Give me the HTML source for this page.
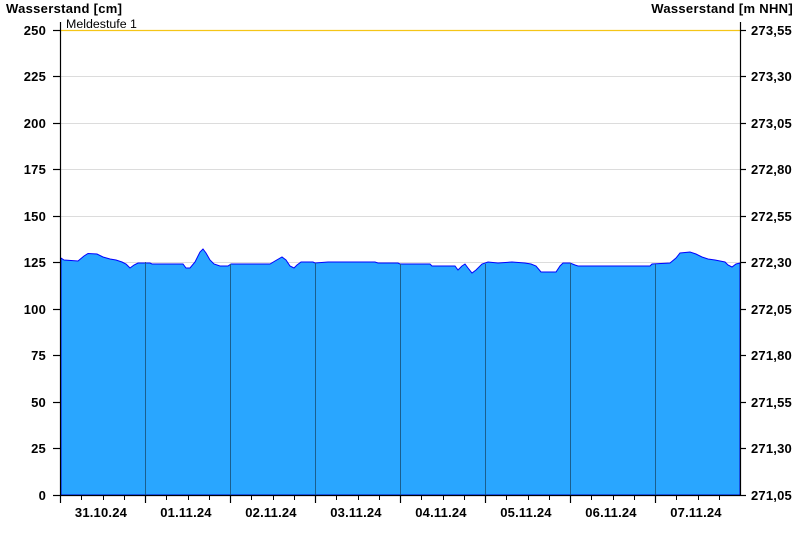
<!DOCTYPE html>
<html><head><style>body{margin:0;background:#fff}svg{display:block}text{font-family:"Liberation Sans",Arial,sans-serif}</style></head><body>
<svg width="800" height="550" viewBox="0 0 800 550">
<g stroke="#dcdcdc" stroke-width="1">
<line x1="60" y1="76.5" x2="740" y2="76.5"/><line x1="60" y1="123.5" x2="740" y2="123.5"/><line x1="60" y1="169.5" x2="740" y2="169.5"/><line x1="60" y1="216.5" x2="740" y2="216.5"/><line x1="60" y1="262.5" x2="740" y2="262.5"/>
</g>
<line x1="60" y1="30.5" x2="740" y2="30.5" stroke="#f5c518" stroke-width="1.2"/>
<polygon fill="#29a6ff" stroke="#0000ff" stroke-width="1" points="61,258 64,260 78,261 84,256 88,253.5 97,254 103,257 110,259 116,260 122,262 126,264 130,268 134,265 138,263 150,263 152,264 183,264 186,268 190,268 195,262 200,252 203,249 206,253 210,260 214,264 220,266 228,266 231,264 270,264 275,261 282,257 286,260 290,266 294,268 297,265 301,262 313,262 315,263 328,262 375,262 378,263 398,263 400,264 430,264 432,266 455,266 458,270 462,266 465,264 468,268 472,273 476,270 482,264 488,262 498,263 512,262 525,263 531,264 536,266 541,272 556,272 560,266 563,263 570,263 575,265 578,266 650,266 652,264 670,263 676,258 680,253 690,252 696,254 702,257 708,259 715,260 725,262 728,265 732,267 736,264 740,263 740,495 61,495"/>
<g stroke="#1a5f8f" stroke-width="1">
<line x1="145.5" y1="262" x2="145.5" y2="495"/><line x1="230.5" y1="264" x2="230.5" y2="495"/><line x1="315.5" y1="263" x2="315.5" y2="495"/><line x1="400.5" y1="264" x2="400.5" y2="495"/><line x1="485.5" y1="264" x2="485.5" y2="495"/><line x1="570.5" y1="263" x2="570.5" y2="495"/><line x1="655.5" y1="264" x2="655.5" y2="495"/>
</g>
<g stroke="#000" stroke-width="1.2">
<line x1="60.5" y1="22" x2="60.5" y2="495"/><line x1="740.5" y1="22" x2="740.5" y2="495"/><line x1="60" y1="495.5" x2="740" y2="495.5"/>
<line x1="53" y1="30.5" x2="60" y2="30.5"/><line x1="53" y1="76.5" x2="60" y2="76.5"/><line x1="53" y1="123.5" x2="60" y2="123.5"/><line x1="53" y1="169.5" x2="60" y2="169.5"/><line x1="53" y1="216.5" x2="60" y2="216.5"/><line x1="53" y1="262.5" x2="60" y2="262.5"/><line x1="53" y1="309.5" x2="60" y2="309.5"/><line x1="53" y1="355.5" x2="60" y2="355.5"/><line x1="53" y1="402.5" x2="60" y2="402.5"/><line x1="53" y1="448.5" x2="60" y2="448.5"/><line x1="53" y1="495.5" x2="60" y2="495.5"/>
<line x1="740" y1="30.5" x2="746" y2="30.5"/><line x1="740" y1="76.5" x2="746" y2="76.5"/><line x1="740" y1="123.5" x2="746" y2="123.5"/><line x1="740" y1="169.5" x2="746" y2="169.5"/><line x1="740" y1="216.5" x2="746" y2="216.5"/><line x1="740" y1="262.5" x2="746" y2="262.5"/><line x1="740" y1="309.5" x2="746" y2="309.5"/><line x1="740" y1="355.5" x2="746" y2="355.5"/><line x1="740" y1="402.5" x2="746" y2="402.5"/><line x1="740" y1="448.5" x2="746" y2="448.5"/><line x1="740" y1="495.5" x2="746" y2="495.5"/>
<line x1="60.5" y1="495" x2="60.5" y2="503"/><line x1="145.5" y1="495" x2="145.5" y2="503"/><line x1="230.5" y1="495" x2="230.5" y2="503"/><line x1="315.5" y1="495" x2="315.5" y2="503"/><line x1="400.5" y1="495" x2="400.5" y2="503"/><line x1="485.5" y1="495" x2="485.5" y2="503"/><line x1="570.5" y1="495" x2="570.5" y2="503"/><line x1="655.5" y1="495" x2="655.5" y2="503"/>
</g>
<g stroke="#000" stroke-width="1">
<line x1="81.5" y1="495" x2="81.5" y2="500"/><line x1="103.5" y1="495" x2="103.5" y2="500"/><line x1="124.5" y1="495" x2="124.5" y2="500"/>
<line x1="166.5" y1="495" x2="166.5" y2="500"/><line x1="188.5" y1="495" x2="188.5" y2="500"/><line x1="209.5" y1="495" x2="209.5" y2="500"/>
<line x1="251.5" y1="495" x2="251.5" y2="500"/><line x1="273.5" y1="495" x2="273.5" y2="500"/><line x1="294.5" y1="495" x2="294.5" y2="500"/>
<line x1="336.5" y1="495" x2="336.5" y2="500"/><line x1="358.5" y1="495" x2="358.5" y2="500"/><line x1="379.5" y1="495" x2="379.5" y2="500"/>
<line x1="421.5" y1="495" x2="421.5" y2="500"/><line x1="443.5" y1="495" x2="443.5" y2="500"/><line x1="464.5" y1="495" x2="464.5" y2="500"/>
<line x1="506.5" y1="495" x2="506.5" y2="500"/><line x1="528.5" y1="495" x2="528.5" y2="500"/><line x1="549.5" y1="495" x2="549.5" y2="500"/>
<line x1="591.5" y1="495" x2="591.5" y2="500"/><line x1="613.5" y1="495" x2="613.5" y2="500"/><line x1="634.5" y1="495" x2="634.5" y2="500"/>
<line x1="676.5" y1="495" x2="676.5" y2="500"/><line x1="698.5" y1="495" x2="698.5" y2="500"/><line x1="719.5" y1="495" x2="719.5" y2="500"/>
</g>
<g font-size="13" font-weight="bold" fill="#000" letter-spacing="0.3">
<text x="6" y="13">Wasserstand [cm]</text>
<text x="793" y="13" text-anchor="end">Wasserstand [m NHN]</text>
</g>
<text x="66" y="28" font-size="12.4" fill="#000">Meldestufe 1</text>
<g font-size="13" font-weight="bold" text-anchor="end" fill="#000" letter-spacing="0.2">
<text x="46" y="35">250</text><text x="46" y="81">225</text><text x="46" y="128">200</text><text x="46" y="174">175</text><text x="46" y="221">150</text><text x="46" y="267">125</text><text x="46" y="314">100</text><text x="46" y="360">75</text><text x="46" y="407">50</text><text x="46" y="453">25</text><text x="46" y="500">0</text>
</g>
<g font-size="13" font-weight="bold" fill="#000" letter-spacing="0.2">
<text x="751" y="35">273,55</text><text x="751" y="81">273,30</text><text x="751" y="128">273,05</text><text x="751" y="174">272,80</text><text x="751" y="221">272,55</text><text x="751" y="267">272,30</text><text x="751" y="314">272,05</text><text x="751" y="360">271,80</text><text x="751" y="407">271,55</text><text x="751" y="453">271,30</text><text x="751" y="500">271,05</text>
</g>
<g font-size="13" font-weight="bold" text-anchor="middle" fill="#000" letter-spacing="0.2">
<text x="101" y="517">31.10.24</text><text x="186" y="517">01.11.24</text><text x="271" y="517">02.11.24</text><text x="356" y="517">03.11.24</text><text x="441" y="517">04.11.24</text><text x="526" y="517">05.11.24</text><text x="611" y="517">06.11.24</text><text x="696" y="517">07.11.24</text>
</g>
</svg>
</body></html>
